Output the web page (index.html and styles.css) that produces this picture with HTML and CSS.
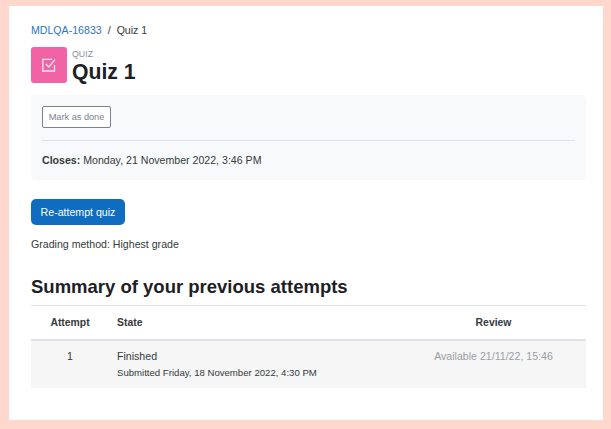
FILE: index.html
```html
<!DOCTYPE html>
<html lang="en">
  <head>
    <meta charset="UTF-8" />
    <meta name="viewport" content="width=device-width, initial-scale=1.0" />
    <title>Quiz 1</title>
    <link rel="stylesheet" href="styles.css">
  </head>
  <body>
    <main class="page">
      <!-- Breadcrumb -->
      <nav class="breadcrumb">
        <a href="#">MDLQA-16833</a>
        <span class="sep">/</span>
        <span>Quiz 1</span>
      </nav>

      <!-- Header -->
      <header class="page-header">
        <div class="activity-icon">
          <svg width="14" height="14" viewBox="0 0 14 14" fill="none" stroke="#fff" stroke-opacity="0.85" stroke-width="1.3">
            <path d="M12.5 7v6H.8V1.4h9.2" />
            <path d="M3.8 6l3 3 6.2-7.4" />
          </svg>
        </div>
        <div>
          <div class="activity-type">QUIZ</div>
          <h1>Quiz 1</h1>
        </div>
      </header>

      <!-- Activity info -->
      <section class="activity-info">
        <button class="btn-done">Mark as done</button>
        <hr />
        <p><strong>Closes:</strong> Monday, 21 November 2022, 3:46 PM</p>
      </section>

      <button class="btn-primary">Re-attempt quiz</button>
      <p class="grading">Grading method: Highest grade</p>

      <h2>Summary of your previous attempts</h2>
      <table class="attempts">
        <thead>
          <tr>
            <th class="col-attempt">Attempt</th>
            <th class="col-state">State</th>
            <th class="col-review">Review</th>
          </tr>
        </thead>
        <tbody>
          <tr>
            <td class="col-attempt">1</td>
            <td class="col-state">
              Finished
              <div class="submitted">Submitted Friday, 18 November 2022, 4:30 PM</div>
            </td>
            <td class="col-review muted">Available 21/11/22, 15:46</td>
          </tr>
        </tbody>
      </table>
    </main>
  </body>
</html>
```

FILE: styles.css
```css
* {
  margin: 0;
  padding: 0;
  box-sizing: border-box;
  font-family: "Liberation Sans", Arial, sans-serif;
}

html {
  height: 100%;
  background-color: #ffd7cc;
  overflow: hidden;
}

body {
  padding: 6px 8px 0 9px;
  color: #343a40;
  font-size: 10.6px;
  line-height: 17px;
}

.page {
  height: 414px;
  background-color: #fff;
  padding: 16px 17px 0 22px;
}

/* Breadcrumb */
.breadcrumb {
  display: flex;
  gap: 6px;
  height: 17px;
}

.breadcrumb a {
  color: #2f74c0;
  text-decoration: none;
}

.page-header {
  display: flex;
  align-items: flex-start;
  gap: 5px;
  margin-top: 8px;
}

.activity-icon {
  display: flex;
  align-items: center;
  justify-content: center;
  width: 36px;
  height: 36px;
  background-color: #f064a5;
  border-radius: 3px;
}

.activity-type {
  color: #8a9097;
  font-size: 8.8px;
  line-height: 11px;
  margin-top: 2px;
}

h1 {
  margin-top: -1px;
  font-size: 21.2px;
  line-height: 25px;
  font-weight: bold;
  color: #1d2125;
}

/* Activity info */
.activity-info {
  margin-top: 11px;
  height: 85px;
  padding: 11px 11px 0;
  background-color: #f8f9fa;
  border-radius: 5px;
}

.btn-done {
  display: block;
  height: 22px;
  width: 69px;
  font-size: 9.2px;
  color: #7a838c;
  background-color: #fff;
  border: 1px solid #7a838c;
  border-radius: 2px;
}

.activity-info hr {
  border: 0;
  border-top: 1px solid #dee2e6;
  margin: 12px 0 11px;
}

.btn-primary {
  display: block;
  margin-top: 19px;
  height: 26px;
  width: 94px;
  font-size: 10.6px;
  color: #fff;
  background-color: #0f6cbf;
  border: 0;
  border-radius: 5px;
}

.grading {
  margin-top: 11px;
}

h2 {
  margin-top: 22px;
  font-size: 18.5px;
  line-height: 24px;
  font-weight: bold;
  color: #1d2125;
}

/* Attempts table */
.attempts {
  width: 100%;
  margin-top: 6px;
  border-collapse: collapse;
  table-layout: fixed;
}

.attempts th {
  height: 34px;
  padding-bottom: 0;
  font-size: 10.4px;
  font-weight: bold;
  color: #343a40;
  border-top: 1px solid #dee2e6;
  border-bottom: 2px solid #dee2e6;
}

.attempts td {
  height: 48px;
  padding-top: 7px;
  vertical-align: top;
  background-color: #f6f6f6;
}

.col-attempt {
  width: 78px;
  text-align: center;
}

.col-state {
  width: 295px;
  padding-left: 8px;
  text-align: left;
}

.attempts .col-review {
  padding-right: 3px;
  text-align: center;
}

.submitted {
  font-size: 9.6px;
  line-height: 15px;
}

.muted {
  color: #999ea5;
}
```
